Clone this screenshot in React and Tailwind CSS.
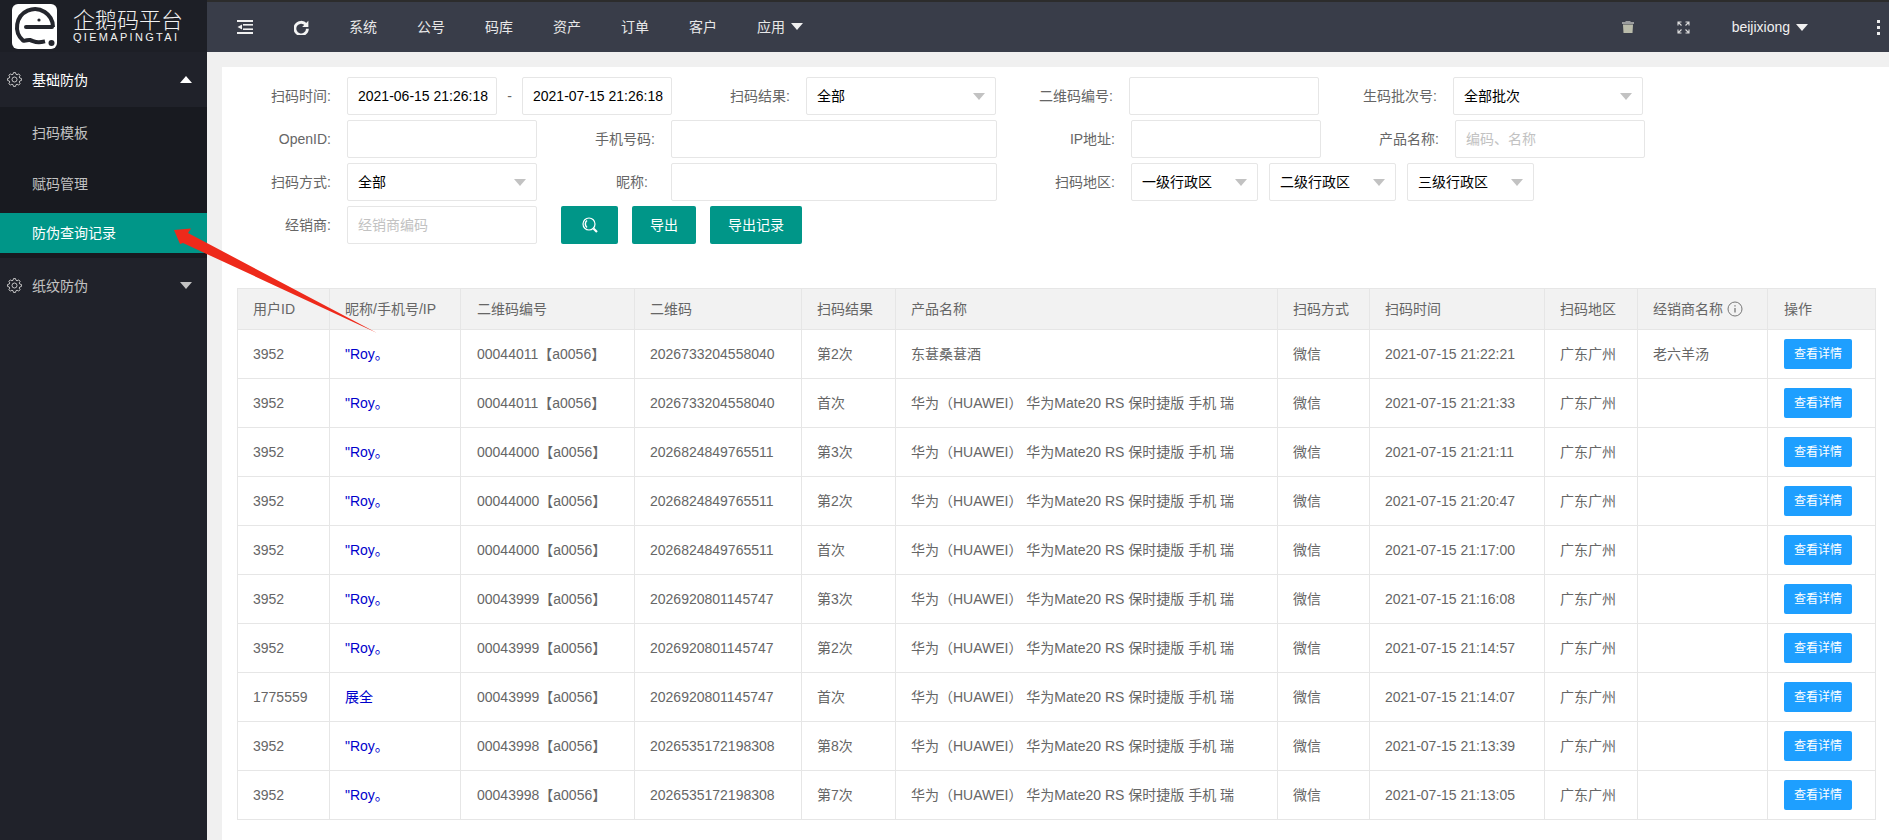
import React from "react";

const FONT = "font-['Liberation_Sans','Noto_Sans_CJK_SC',sans-serif]";

function Tri({ up }) {
  return up ? (
    <span className="inline-block w-0 h-0 border-x-[6px] border-x-transparent border-b-[7px] border-b-white" />
  ) : (
    <span className="inline-block w-0 h-0 border-x-[6px] border-x-transparent border-t-[7px] border-t-[#c2c2c2]" />
  );
}

function gearPath() {
  const pts = [];
  const teeth = 8;
  for (let i = 0; i < teeth; i++) {
    const a = (i / teeth) * Math.PI * 2;
    const step = (Math.PI * 2) / teeth;
    const poly = [
      [8.6, a - step * 0.36],
      [11.2, a - step * 0.18],
      [11.2, a + step * 0.18],
      [8.6, a + step * 0.36],
    ];
    poly.forEach(([r, t]) => pts.push(`${(12 + r * Math.cos(t)).toFixed(2)} ${(12 + r * Math.sin(t)).toFixed(2)}`));
  }
  return "M" + pts.join("L") + "Z";
}

function Gear() {
  return (
    <svg width="15" height="15" viewBox="0 0 24 24" fill="none" stroke="#cfcfcf" strokeWidth="1.500">
      <circle cx="12" cy="12" r="4" />
      <path d={gearPath()} />
    </svg>
  );
}

function Logo() {
  return (
    <div className="h-[52px] bg-[#1d1f26] flex items-center pl-3 shrink-0">
      <svg width="45" height="45" viewBox="0 0 45 45">
        <rect width="45" height="45" rx="6" fill="#ffffff" />
        <path d="M41 23A18 18 0 1 0 11 36.500c3 .8 4.500-1 7-.5 3.500 1 5 2.500 9 2.300 2.500-.1 4-.5 6-1" fill="none" stroke="#24262d" strokeWidth="4" />
        <path d="M14 23h26" stroke="#24262d" strokeWidth="4" strokeLinecap="round" />
        <circle cx="27" cy="16" r="1.600" fill="#24262d" />
        <circle cx="39.500" cy="39" r="3" fill="#24262d" />
      </svg>
      <div className="ml-4 text-[#f2f2f2] w-[110px]">
        <div className="text-[22px] leading-[22px] font-light">企鹅码平台</div>
        <div className="text-[11px] leading-[10px] tracking-[2.3px] whitespace-nowrap font-['Liberation_Sans',sans-serif]">QIEMAPINGTAI</div>
      </div>
    </div>
  );
}

function Sidebar() {
  return (
    <aside className="w-[207px] shrink-0 bg-[#20222a] flex flex-col min-h-[840px] text-sm">
      <Logo />
      <div className="h-[55px] flex items-center pl-[7px] pr-[15px] text-white">
        <Gear />
        <span className="ml-[10px] flex-1">基础防伪</span>
        <Tri up />
      </div>
      <div className="bg-[#181a20] h-[151px] flex flex-col text-[#c2c2c2]">
        <div className="h-[52px] pl-8 flex items-center">扫码模板</div>
        <div className="h-[50px] pl-8 flex items-center">赋码管理</div>
        <div className="h-[40px] mt-[4px] pl-8 flex items-center bg-[#009688] text-white">防伪查询记录</div>
      </div>
      <div className="h-[55px] flex items-center pl-[7px] pr-[15px] text-[#c2c2c2]">
        <Gear />
        <span className="ml-[10px] flex-1">纸纹防伪</span>
        <Tri />
      </div>
    </aside>
  );
}

function TopBar() {
  const nav = ["系统", "公号", "码库", "资产", "订单", "客户"];
  return (
    <header className="h-[52px] bg-[#393d49] border-t-2 border-[#2c2c2c] flex items-center text-sm text-[#e8e8e8]">
      <div className="w-[52px] flex justify-center ml-[12px]">
        <svg width="16" height="14" viewBox="0 0 16 14" fill="#f0f0f0">
          <rect x="0" y="0" width="16" height="2" />
          <rect x="6" y="4" width="10" height="1.600" />
          <path d="M0.500 7 5 4.500v5z" />
          <rect x="6" y="8.400" width="10" height="1.600" />
          <rect x="0" y="12" width="16" height="2" />
        </svg>
      </div>
      <div className="w-[16px] flex justify-center ml-[22px]">
        <svg width="15" height="15" viewBox="0 0 24 24" fill="none" stroke="#f4f4f4" strokeWidth="4.500">
          <path d="M19 7A10 10 0 1 0 21.500 14" />
          <path d="M23 1v10H13z" fill="#f4f4f4" stroke="none" />
        </svg>
      </div>
      <nav className="flex ml-[20px] -mt-[1px]">
        {nav.map((n) => (
          <span key={n} className="px-[20px]">{n}</span>
        ))}
        <span className="px-[20px] flex items-center">
          应用
          <span className="ml-[6px] w-0 h-0 border-x-[6px] border-x-transparent border-t-[7px] border-t-[#f0f0f0]" />
        </span>
      </nav>
      <div className="ml-auto flex items-center pr-[9px]">
        <svg width="12" height="12" viewBox="0 0 12 12" fill="#b9bbaa">
          <rect x="0" y="1" width="12" height="2" fill="#9a9c9e" />
          <rect x="3.500" y="0" width="5" height="1.500" fill="#9a9c9e" />
          <path d="M1 3.500h10l-.5 8.500h-9z" />
        </svg>
        <svg className="ml-[43px]" width="13" height="13" viewBox="0 0 13 13" fill="none" stroke="#dcdcdc" strokeWidth="1.100">
          <path d="M1 4.500V1h3.500M8.500 1H12v3.500M12 8.500V12H8.500M4.500 12H1V8.500M1 1l3.500 3.500M12 1 8.500 4.500M12 12 8.500 8.500M1 12l3.500-3.500" />
        </svg>
        <span className="ml-[42px] text-[#f0f0f0]">beijixiong</span>
        <span className="ml-[6px] w-0 h-0 border-x-[6px] border-x-transparent border-t-[7px] border-t-[#f0f0f0]" />
        <span className="ml-[69px] flex flex-col gap-[3px]">
          <i className="block w-[3px] h-[3px] bg-[#eeeeee]" />
          <i className="block w-[3px] h-[3px] bg-[#eeeeee]" />
          <i className="block w-[3px] h-[3px] bg-[#eeeeee]" />
        </span>
      </div>
    </header>
  );
}

function Label({ w, pr = "pr-4", children }) {
  return <label className={`${w} ${pr} text-right text-[#666666] shrink-0 leading-[38px]`}>{children}</label>;
}

function Input({ w, value, placeholder }) {
  return (
    <div className={`${w} h-[38px] shrink-0 bg-white border border-[#e6e6e6] rounded-[2px] pl-[10px] leading-[36px] whitespace-nowrap overflow-hidden ${value ? "text-black" : "text-[#c2c2c2]"}`}>
      {value || placeholder || ""}
    </div>
  );
}

function Select({ w, value }) {
  return (
    <div className={`${w} h-[38px] shrink-0 bg-white border border-[#e6e6e6] rounded-[2px] pl-[10px] pr-[10px] flex items-center justify-between text-black`}>
      <span>{value}</span>
      <span className="w-0 h-0 border-x-[6px] border-x-transparent border-t-[7px] border-t-[#c2c2c2]" />
    </div>
  );
}

function Btn({ w, children }) {
  return (
    <button className={`${w} h-[38px] bg-[#009688] text-white rounded-[2px] flex items-center justify-center text-sm`}>
      {children}
    </button>
  );
}

function FilterForm() {
  return (
    <div className="flex flex-col gap-[5px] text-sm">
      <div className="flex">
        <Label w="w-[125px]">扫码时间:</Label>
        <Input w="w-[150px]" value="2021-06-15 21:26:18" />
        <span className="w-[25px] text-center text-[#666666] leading-[38px]">-</span>
        <Input w="w-[150px]" value="2021-07-15 21:26:18" />
        <Label w="w-[134px]">扫码结果:</Label>
        <Select w="w-[190px]" value="全部" />
        <Label w="w-[133px]">二维码编号:</Label>
        <Input w="w-[190px]" />
        <Label w="w-[134px]">生码批次号:</Label>
        <Select w="w-[190px]" value="全部批次" />
      </div>
      <div className="flex">
        <Label w="w-[125px]">OpenID:</Label>
        <Input w="w-[190px]" />
        <Label w="w-[134px]">手机号码:</Label>
        <Input w="w-[326px]" />
        <Label w="w-[134px]">IP地址:</Label>
        <Input w="w-[190px]" />
        <Label w="w-[134px]">产品名称:</Label>
        <Input w="w-[190px]" placeholder="编码、名称" />
      </div>
      <div className="flex">
        <Label w="w-[125px]">扫码方式:</Label>
        <Select w="w-[190px]" value="全部" />
        <Label w="w-[134px]" pr="pr-[23px]">昵称:</Label>
        <Input w="w-[326px]" />
        <Label w="w-[134px]">扫码地区:</Label>
        <div className="flex gap-[11px]">
          <Select w="w-[127px]" value="一级行政区" />
          <Select w="w-[127px]" value="二级行政区" />
          <Select w="w-[127px]" value="三级行政区" />
        </div>
      </div>
      <div className="flex">
        <Label w="w-[125px]">经销商:</Label>
        <Input w="w-[190px]" placeholder="经销商编码" />
        <div className="flex ml-[24px] gap-[14px]">
          <Btn w="w-[57px]">
            <svg width="20" height="20" viewBox="0 0 20 20" fill="none" stroke="#ffffff" strokeWidth="1.200">
              <circle cx="9" cy="9" r="6" />
              <path d="M7 5.500a4.500 4.500 0 0 0 0 7" strokeWidth="1.500" />
              <path d="M13.500 13.500l3.500 3.500" strokeWidth="2.200" />
            </svg>
          </Btn>
          <Btn w="w-[64px]">导出</Btn>
          <Btn w="w-[92px]">导出记录</Btn>
        </div>
      </div>
    </div>
  );
}

const PRODUCT = "华为（HUAWEI） 华为Mate20 RS 保时捷版 手机 瑞";
const rows = [
  ["3952", "\"Roy。", "00044011【a0056】", "2026733204558040", "第2次", "东葚桑葚酒", "2021-07-15 21:22:21", "老六羊汤"],
  ["3952", "\"Roy。", "00044011【a0056】", "2026733204558040", "首次", PRODUCT, "2021-07-15 21:21:33", ""],
  ["3952", "\"Roy。", "00044000【a0056】", "2026824849765511", "第3次", PRODUCT, "2021-07-15 21:21:11", ""],
  ["3952", "\"Roy。", "00044000【a0056】", "2026824849765511", "第2次", PRODUCT, "2021-07-15 21:20:47", ""],
  ["3952", "\"Roy。", "00044000【a0056】", "2026824849765511", "首次", PRODUCT, "2021-07-15 21:17:00", ""],
  ["3952", "\"Roy。", "00043999【a0056】", "2026920801145747", "第3次", PRODUCT, "2021-07-15 21:16:08", ""],
  ["3952", "\"Roy。", "00043999【a0056】", "2026920801145747", "第2次", PRODUCT, "2021-07-15 21:14:57", ""],
  ["1775559", "展全", "00043999【a0056】", "2026920801145747", "首次", PRODUCT, "2021-07-15 21:14:07", ""],
  ["3952", "\"Roy。", "00043998【a0056】", "2026535172198308", "第8次", PRODUCT, "2021-07-15 21:13:39", ""],
  ["3952", "\"Roy。", "00043998【a0056】", "2026535172198308", "第7次", PRODUCT, "2021-07-15 21:13:05", ""],
];

function Table() {
  const th = "border border-[#e6e6e6] pl-[15px] font-normal text-left";
  const td = "border border-[#e6e6e6] pl-[15px] whitespace-nowrap overflow-hidden";
  const th16 = "border border-[#e6e6e6] pl-[16px] font-normal text-left";
  const td16 = "border border-[#e6e6e6] pl-[16px] whitespace-nowrap overflow-hidden";
  return (
    <table className="mt-[44px] w-[1638px] table-fixed border-collapse text-sm text-[#666666]">
      <colgroup>
        <col className="w-[92px]" />
        <col className="w-[131px]" />
        <col className="w-[174px]" />
        <col className="w-[167px]" />
        <col className="w-[94px]" />
        <col className="w-[382px]" />
        <col className="w-[92px]" />
        <col className="w-[175px]" />
        <col className="w-[93px]" />
        <col className="w-[130px]" />
        <col className="w-[108px]" />
      </colgroup>
      <thead>
        <tr className="h-[41px] bg-[#f2f2f2]">
          <th className={th}>用户ID</th>
          <th className={th}>昵称/手机号/IP</th>
          <th className={th16}>二维码编号</th>
          <th className={th}>二维码</th>
          <th className={th}>扫码结果</th>
          <th className={th}>产品名称</th>
          <th className={th}>扫码方式</th>
          <th className={th}>扫码时间</th>
          <th className={th}>扫码地区</th>
          <th className={th}>
            <span className="inline-flex items-center gap-[4px]">
              经销商名称
              <svg width="16" height="16" viewBox="0 0 16 16" fill="none" stroke="#777777">
                <circle cx="8" cy="8" r="7" />
                <path d="M8 7v4.500M8 4.200v1.400" strokeWidth="1.300" />
              </svg>
            </span>
          </th>
          <th className={th16}>操作</th>
        </tr>
      </thead>
      <tbody>
        {rows.map((r, i) => (
          <tr key={i} className="h-[49px]">
            <td className={td}>{r[0]}</td>
            <td className={`${td} text-[#0000cc]`}>{r[1]}</td>
            <td className={td16}>{r[2]}</td>
            <td className={td}>{r[3]}</td>
            <td className={td}>{r[4]}</td>
            <td className={td}>{r[5]}</td>
            <td className={td}>微信</td>
            <td className={td}>{r[6]}</td>
            <td className={td}>广东广州</td>
            <td className={td}>{r[7]}</td>
            <td className={td16}>
              <button className="w-[68px] h-[30px] bg-[#1e9fff] text-white text-xs rounded-[2px]">查看详情</button>
            </td>
          </tr>
        ))}
      </tbody>
    </table>
  );
}

function Arrow() {
  return (
    <svg className="absolute left-0 top-0 pointer-events-none" width="400" height="350" viewBox="0 0 400 350">
      <polygon points="174,230 191,228.500 188,233 377,333 183,243 180,244" fill="#ee2a1b" />
    </svg>
  );
}

export default function App() {
  return (
    <div className={`relative flex h-[840px] overflow-hidden ${FONT}`}>
      <Sidebar />
      <div className="flex-1 min-w-0 bg-[#f0f0f0]">
        <TopBar />
        <main className="ml-[15px] mt-[15px] bg-white h-full pt-[10px]">
          <FilterForm />
          <div className="pl-[15px]">
            <Table />
          </div>
        </main>
      </div>
      <Arrow />
    </div>
  );
}
